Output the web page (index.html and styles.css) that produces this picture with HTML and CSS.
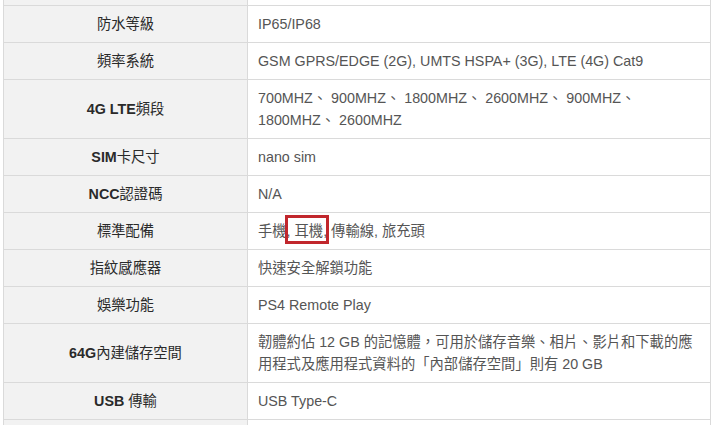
FILE: index.html
```html
<!DOCTYPE html>
<html lang="zh-Hant">
<head>
<meta charset="utf-8">
<link rel="stylesheet" href="styles.css">
</head>
<body>
<table class="spec">
  <colgroup><col class="c1"><col class="c2"></colgroup>
  <tr class="stub"><th></th><td></td></tr>
  <tr><th>防水等級</th><td>IP65/IP68</td></tr>
  <tr><th>頻率系統</th><td>GSM GPRS/EDGE (2G), UMTS HSPA+ (3G), LTE (4G) Cat9</td></tr>
  <tr><th><b>4G LTE</b>頻段</th><td>700MHZ、 900MHZ、 1800MHZ、 2600MHZ、 900MHZ、<br>1800MHZ、 2600MHZ</td></tr>
  <tr><th><b>SIM</b>卡尺寸</th><td>nano sim</td></tr>
  <tr><th><b>NCC</b>認證碼</th><td>N/A</td></tr>
  <tr><th>標準配備</th><td>手機, <span class="hl">耳機</span>, 傳輸線, 旅充頭</td></tr>
  <tr><th>指紋感應器</th><td>快速安全解鎖功能</td></tr>
  <tr><th>娛樂功能</th><td>PS4 Remote Play</td></tr>
  <tr><th><b>64G</b>內建儲存空間</th><td>韌體約佔 12 GB 的記憶體，可用於儲存音樂、相片、影片和下載的應用程式及應用程式資料的「內部儲存空間」則有 20 GB</td></tr>
  <tr><th><b>USB</b> 傳輸</th><td>USB Type-C</td></tr>
  <tr><th></th><td></td></tr>
</table>
</body>
</html>
```

FILE: styles.css
```css
html, body {
  margin: 0;
  padding: 0;
  background: #fff;
}
body {
  padding-left: 3px;
  font-family: "Liberation Sans", "Noto Sans CJK TC", sans-serif;
  font-size: 14.3px;
}
.spec {
  border-collapse: collapse;
  table-layout: fixed;
  width: 708px;
}
.spec .c1 { width: 244px; }
.spec th, .spec td {
  border: 1px solid #dadada;
  padding: 7px 10px;
  line-height: 22px;
  height: 22px;
  vertical-align: middle;
}
.spec th {
  background: #f2f2f2;
  color: #2a2a2a;
  font-weight: 400;
  text-align: center;
}
.spec th b { font-weight: 700; }
.spec td {
  color: #555;
  text-align: left;
}
.spec .stub th, .spec .stub td {
  border-top: none;
  padding: 0;
  height: 5px;
  line-height: 5px;
}
.hl {
  position: relative;
  display: inline-block;
}
.hl::after {
  content: "";
  position: absolute;
  left: -10px;
  right: -6px;
  top: -5px;
  bottom: -2px;
  border: 3px solid #c1272d;
}
```
